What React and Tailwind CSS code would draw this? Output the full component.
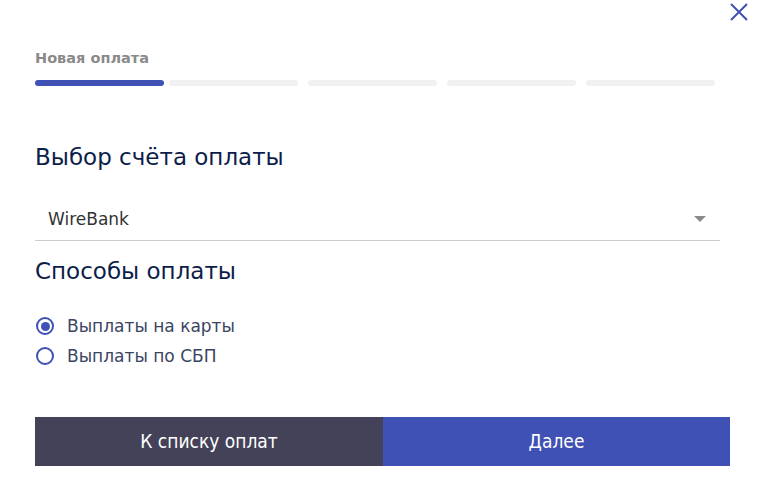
import { useState } from 'react'

const steps = [
  { w: 'w-[129px]', ml: '', active: true },
  { w: 'w-[129px]', ml: 'ml-[5px]', active: false },
  { w: 'w-[129px]', ml: 'ml-[10px]', active: false },
  { w: 'w-[129px]', ml: 'ml-[10px]', active: false },
  { w: 'w-[129px]', ml: 'ml-[10px]', active: false },
]

const methods = ['Выплаты на карты', 'Выплаты по СБП']

export default function App() {
  const [method, setMethod] = useState(0)

  return (
    <div className="relative w-[757px] h-[487px] bg-white font-['DejaVu_Sans',sans-serif] overflow-hidden">
      {/* CLOSE */}
      <button className="absolute top-[3px] right-[9px] w-[18px] h-[18px]">
        <svg viewBox="0 0 18 18" className="w-[18px] h-[18px]">
          <path d="M1 1 L17 17 M17 1 L1 17" stroke="#3f51b5" strokeWidth="2" fill="none" />
        </svg>
      </button>

      <div className="px-[35px] flex flex-col">
        {/* STEPS */}
        <div className="mt-[48px] text-[14.5px] leading-[20px] font-bold text-[#8a8a8a]">
          Новая оплата
        </div>

        <div className="mt-[12px] flex">
          {steps.map((s, i) => (
            <div
              key={i}
              className={`${s.w} ${s.ml} h-[6px] rounded-full ${s.active ? 'bg-[#3f51b5]' : 'bg-[#f1f1f1]'}`}
            />
          ))}
        </div>

        {/* ACCOUNT */}
        <h2 className="mt-[55px] text-[23px] leading-[32px] text-[#0d1d4a]">
          Выбор счёта оплаты
        </h2>

        <div className="mt-[26px] w-[685px] pt-[8px] pb-[9px] pl-[13px] pr-[14px] border-b border-[#cccccc] flex items-center justify-between">
          <span className="text-[17px] leading-[24px] text-[#333333]">WireBank</span>
          <svg viewBox="0 0 12 6" className="w-[12px] h-[6px]">
            <path d="M0 0 L12 0 L6 6 Z" fill="#8a8a8a" />
          </svg>
        </div>

        {/* METHODS */}
        <h2 className="mt-[14px] text-[23px] leading-[32px] text-[#0d1d4a]">
          Способы оплаты
        </h2>

        <div className="mt-[27px] flex flex-col gap-[6px]">
          {methods.map((m, i) => (
            <label
              key={m}
              onClick={() => setMethod(i)}
              className="flex items-center gap-[13px] cursor-pointer"
            >
              <span className="w-[18px] h-[18px] ml-[1px] rounded-full border-2 border-[#3f51b5] flex items-center justify-center">
                {method === i && <span className="w-[9px] h-[9px] rounded-full bg-[#3f51b5]" />}
              </span>
              <span className="text-[17px] leading-[24px] text-[#3b4562]">{m}</span>
            </label>
          ))}
        </div>

        {/* BUTTONS */}
        <div className="mt-[49px] w-[695px] h-[49px] flex">
          <button className="w-[348px] h-full bg-[#434259] text-white text-[19px] font-['DejaVu_Sans_Condensed','DejaVu_Sans',sans-serif] font-stretch-condensed">
            К списку оплат
          </button>
          <button className="flex-1 h-full bg-[#3f51b5] text-white text-[19px] font-['DejaVu_Sans_Condensed','DejaVu_Sans',sans-serif] font-stretch-condensed">
            Далее
          </button>
        </div>
      </div>
    </div>
  )
}
